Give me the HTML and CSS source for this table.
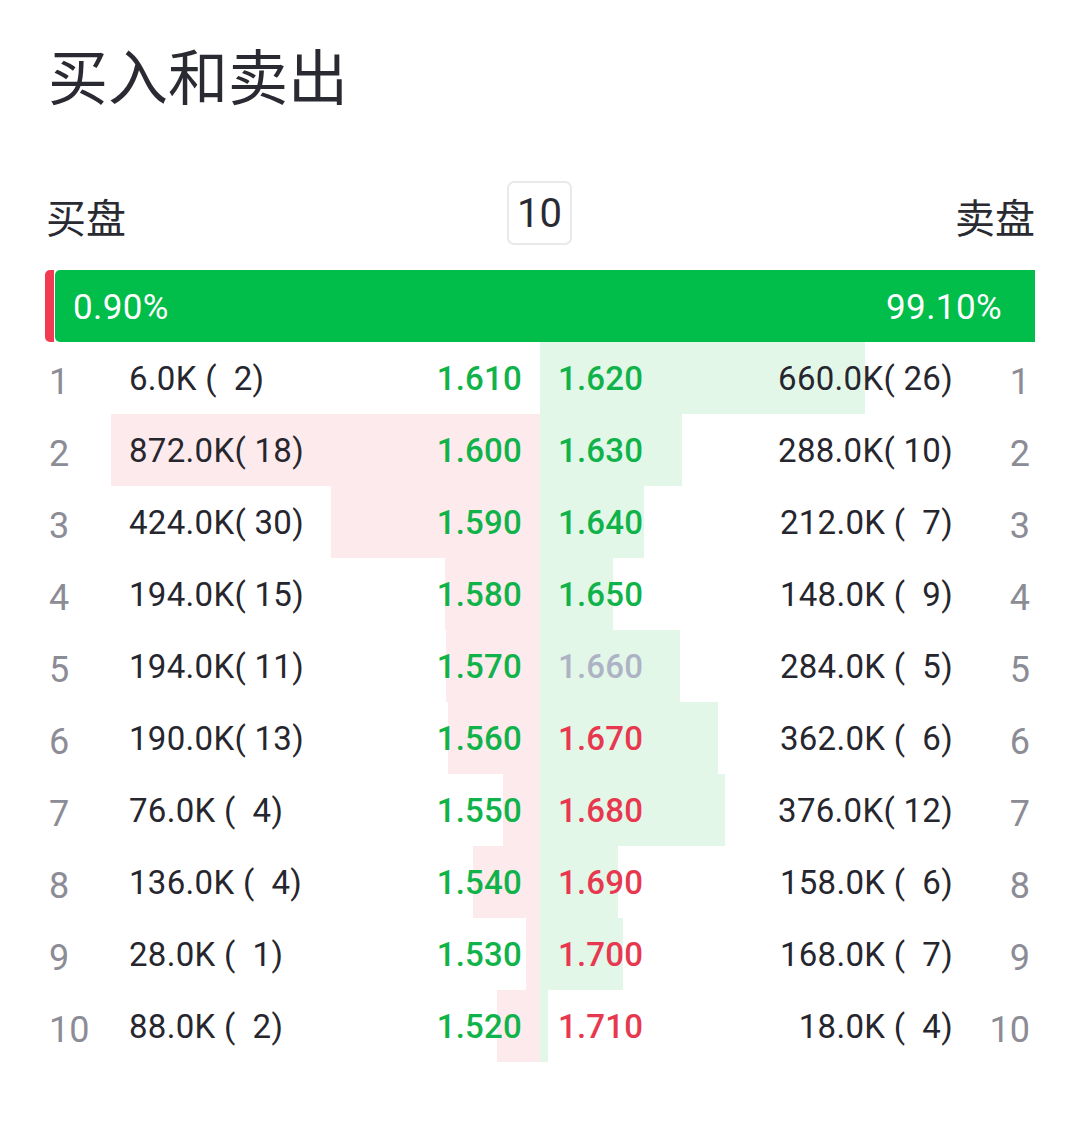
FILE: index.html
```html
<!DOCTYPE html>
<html lang="zh">
<head>
<meta charset="utf-8">
<title>买入和卖出</title>
<link rel="stylesheet" href="styles.css">
</head>
<body>
<div class="page">
  <h1 class="title">买入和卖出</h1>

  <div class="header">
    <span class="side">买盘</span>
    <span class="depth-box">10</span>
    <span class="side">卖盘</span>
  </div>

  <div class="ratio">
    <div class="ratio-buy"></div>
    <div class="ratio-sell">
      <span>0.90%</span>
      <span>99.10%</span>
    </div>
  </div>

  <div class="book">
    <div class="row">
      <div class="bars"><div class="half bid"><i style="width:0px"></i></div><div class="half ask"><i style="width:325px"></i></div></div>
      <div class="half left"><span class="idx">1</span><span class="vol">6.0K (  2)</span><span class="price up">1.610</span></div>
      <div class="half right"><span class="price up">1.620</span><span class="vol">660.0K( 26)</span><span class="idx">1</span></div>
    </div>
    <div class="row">
      <div class="bars"><div class="half bid"><i style="width:429px"></i></div><div class="half ask"><i style="width:142px"></i></div></div>
      <div class="half left"><span class="idx">2</span><span class="vol">872.0K( 18)</span><span class="price up">1.600</span></div>
      <div class="half right"><span class="price up">1.630</span><span class="vol">288.0K( 10)</span><span class="idx">2</span></div>
    </div>
    <div class="row">
      <div class="bars"><div class="half bid"><i style="width:209px"></i></div><div class="half ask"><i style="width:104px"></i></div></div>
      <div class="half left"><span class="idx">3</span><span class="vol">424.0K( 30)</span><span class="price up">1.590</span></div>
      <div class="half right"><span class="price up">1.640</span><span class="vol">212.0K (  7)</span><span class="idx">3</span></div>
    </div>
    <div class="row">
      <div class="bars"><div class="half bid"><i style="width:95px"></i></div><div class="half ask"><i style="width:73px"></i></div></div>
      <div class="half left"><span class="idx">4</span><span class="vol">194.0K( 15)</span><span class="price up">1.580</span></div>
      <div class="half right"><span class="price up">1.650</span><span class="vol">148.0K (  9)</span><span class="idx">4</span></div>
    </div>
    <div class="row">
      <div class="bars"><div class="half bid"><i style="width:94px"></i></div><div class="half ask"><i style="width:140px"></i></div></div>
      <div class="half left"><span class="idx">5</span><span class="vol">194.0K( 11)</span><span class="price up">1.570</span></div>
      <div class="half right"><span class="price flat">1.660</span><span class="vol">284.0K (  5)</span><span class="idx">5</span></div>
    </div>
    <div class="row">
      <div class="bars"><div class="half bid"><i style="width:92px"></i></div><div class="half ask"><i style="width:178px"></i></div></div>
      <div class="half left"><span class="idx">6</span><span class="vol">190.0K( 13)</span><span class="price up">1.560</span></div>
      <div class="half right"><span class="price down">1.670</span><span class="vol">362.0K (  6)</span><span class="idx">6</span></div>
    </div>
    <div class="row">
      <div class="bars"><div class="half bid"><i style="width:37px"></i></div><div class="half ask"><i style="width:185px"></i></div></div>
      <div class="half left"><span class="idx">7</span><span class="vol">76.0K (  4)</span><span class="price up">1.550</span></div>
      <div class="half right"><span class="price down">1.680</span><span class="vol">376.0K( 12)</span><span class="idx">7</span></div>
    </div>
    <div class="row">
      <div class="bars"><div class="half bid"><i style="width:67px"></i></div><div class="half ask"><i style="width:78px"></i></div></div>
      <div class="half left"><span class="idx">8</span><span class="vol">136.0K (  4)</span><span class="price up">1.540</span></div>
      <div class="half right"><span class="price down">1.690</span><span class="vol">158.0K (  6)</span><span class="idx">8</span></div>
    </div>
    <div class="row">
      <div class="bars"><div class="half bid"><i style="width:14px"></i></div><div class="half ask"><i style="width:83px"></i></div></div>
      <div class="half left"><span class="idx">9</span><span class="vol">28.0K (  1)</span><span class="price up">1.530</span></div>
      <div class="half right"><span class="price down">1.700</span><span class="vol">168.0K (  7)</span><span class="idx">9</span></div>
    </div>
    <div class="row">
      <div class="bars"><div class="half bid"><i style="width:43px"></i></div><div class="half ask"><i style="width:8px"></i></div></div>
      <div class="half left"><span class="idx">10</span><span class="vol">88.0K (  2)</span><span class="price up">1.520</span></div>
      <div class="half right"><span class="price down">1.710</span><span class="vol">18.0K (  4)</span><span class="idx">10</span></div>
    </div>
  </div>
</div>
</body>
</html>
```

FILE: styles.css
```css
* { box-sizing: border-box; }

html, body {
  margin: 0;
  padding: 0;
  background: #ffffff;
}

body {
  font-family: Roboto, "Noto Sans CJK SC", "Noto Sans", sans-serif;
  color: #26262e;
}

.page {
  width: 1080px;
  padding: 0 45px;
}

.title {
  margin: 0;
  padding: 44px 0 0 3px;
  font-family: "Noto Sans CJK SC", sans-serif;
  font-weight: 400;
  font-size: 60px;
  line-height: 60px;
  color: #2a2a32;
}

.header {
  margin-top: 77px;
  height: 64px;
  display: flex;
  align-items: center;
  justify-content: space-between;
}

.side {
  font-family: "Noto Sans CJK SC", sans-serif;
  font-size: 40px;
  line-height: 40px;
  padding-top: 5px;
  color: #2a2a32;
}

.side:first-child { margin-left: 1px; }
.side:last-child { margin-right: 0; }

.depth-box {
  width: 65px;
  height: 64px;
  margin-left: -2px;
  border: 2px solid #e9e9ec;
  border-radius: 7px;
  display: flex;
  align-items: center;
  justify-content: center;
  font-family: Roboto, sans-serif;
  font-size: 40px;
  color: #2a2a32;
}

.ratio {
  margin-top: 25px;
  height: 72px;
  display: flex;
  gap: 1px;
}

.ratio-buy {
  width: 9px;
  background: #f23a55;
  border-radius: 5px 0 0 5px;
}

.ratio-sell {
  flex: 1;
  background: #01bd49;
  border-radius: 5px 0 0 5px;
  display: flex;
  align-items: center;
  justify-content: space-between;
  padding: 2px 33px 0 18px;
  color: #ffffff;
  font-size: 35px;
  letter-spacing: 0.4px;
}

.book {
  display: flex;
  flex-direction: column;
}

.row {
  position: relative;
  height: 72px;
  display: flex;
  font-size: 33px;
  line-height: 72px;
  white-space: pre;
}

.bars {
  position: absolute;
  inset: 0;
  display: flex;
  z-index: 0;
}

.half {
  width: 495px;
  display: flex;
}

.bid { justify-content: flex-end; }
.ask { justify-content: flex-start; }

.bid i { display: block; background: #fdeaec; }
.ask i { display: block; background: #e3f7e9; }

.left, .right {
  position: relative;
  z-index: 1;
  align-items: center;
}

.left { padding: 2px 18px 0 4px; }
.right { padding: 2px 5px 0 18px; }

.idx {
  width: 80px;
  color: #8c8c96;
  font-size: 36px;
  line-height: 72px;
  padding-top: 6px;
}

.right .idx { text-align: right; width: 77px; }

.vol {
  flex: 1;
  color: #26262e;
  letter-spacing: 0.3px;
}

.right .vol { text-align: right; }

.price {
  font-weight: 500;
  font-size: 33px;
  letter-spacing: 0.2px;
}
.price.up { color: #10b24a; }
.price.down { color: #e8384f; }
.price.flat { color: #adb3c4; }
```
